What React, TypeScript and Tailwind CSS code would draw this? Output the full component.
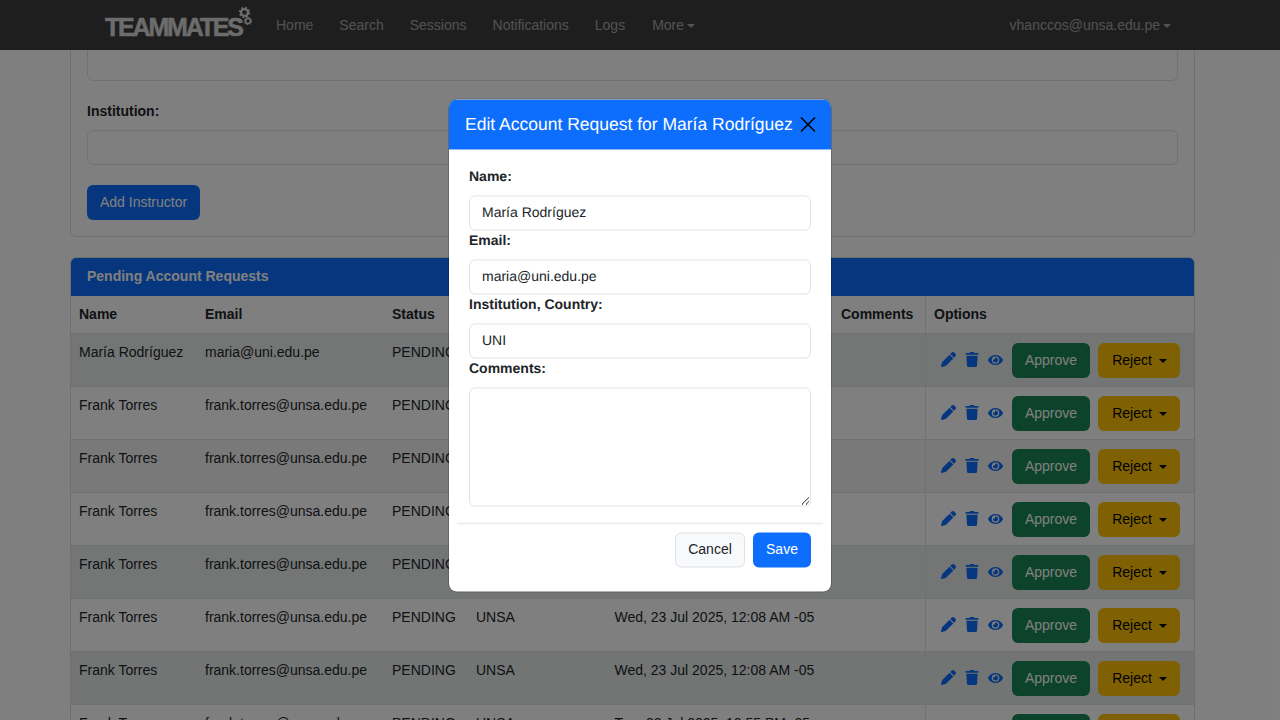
import { FaEye, FaTrash } from "react-icons/fa";
import { FaPen } from "react-icons/fa6";

const navLinks = ["Home", "Search", "Sessions", "Notifications", "Logs"];

const rows = [
  { name: "María Rodríguez", email: "maria@uni.edu.pe", inst: "UNI", date: "Wed, 23 Jul 2025, 12:10 AM -05", tint: "bg-[#e8eceb]" },
  { name: "Frank Torres", email: "frank.torres@unsa.edu.pe", inst: "UNSA", date: "Wed, 23 Jul 2025, 12:08 AM -05", tint: "" },
  { name: "Frank Torres", email: "frank.torres@unsa.edu.pe", inst: "UNSA", date: "Wed, 23 Jul 2025, 12:08 AM -05", tint: "bg-[#f2f2f2]" },
  { name: "Frank Torres", email: "frank.torres@unsa.edu.pe", inst: "UNSA", date: "Wed, 23 Jul 2025, 12:08 AM -05", tint: "" },
  { name: "Frank Torres", email: "frank.torres@unsa.edu.pe", inst: "UNSA", date: "Wed, 23 Jul 2025, 12:08 AM -05", tint: "bg-[#e8eceb]" },
  { name: "Frank Torres", email: "frank.torres@unsa.edu.pe", inst: "UNSA", date: "Wed, 23 Jul 2025, 12:08 AM -05", tint: "" },
  { name: "Frank Torres", email: "frank.torres@unsa.edu.pe", inst: "UNSA", date: "Wed, 23 Jul 2025, 12:08 AM -05", tint: "bg-[#e6e9e8]" },
  { name: "Frank Torres", email: "frank.torres@unsa.edu.pe", inst: "UNSA", date: "Tue, 22 Jul 2025, 10:55 PM -05", tint: "" },
];

const Gear = ({ x, y, r }: { x: number; y: number; r: number }) => (
  <g fill="none" stroke="#d8d8d8">
    <circle cx={x} cy={y} r={r * 0.62} strokeWidth={r * 0.42} />
    <circle cx={x} cy={y} r={r * 0.88} strokeWidth={r * 0.3} strokeDasharray={`${r * 0.345} ${r * 0.345}`} />
  </g>
);

const Caret = ({ gap }: { gap: string }) => (
  <span className={`${gap} inline-block w-0 h-0 align-[2px] border-x-[4px] border-x-transparent border-t-[4px] border-t-current`} />
);

const App = () => {
  return (
    <div className="relative h-screen overflow-hidden bg-white text-[14px] leading-[21px] text-[#212529] font-['Liberation_Sans',Arial,sans-serif]">
      {/* navbar */}
      <nav className="absolute inset-x-0 top-0 z-10 h-[50px] bg-[#3c3c3c] flex items-center pl-[105px] pr-[109px]">
        <div className="relative w-[148px] h-[50px] mr-[23px]">
          <span className="absolute left-0 top-[12px] text-[25px] leading-[30px] font-bold tracking-[-2.2px] text-[#d8d8d8] [-webkit-text-stroke:0.5px_#d8d8d8]">TEAMMATES</span>
          <svg className="absolute left-[131px] top-[4px]" width="20" height="24" viewBox="0 0 20 24">
            <Gear x={8.5} y={8.5} r={5.5} />
            <Gear x={12} y={17} r={4} />
          </svg>
        </div>
        <div className="flex gap-[26px] text-[#ffffff8c]">
          {navLinks.map((link) => (
            <span key={link}>{link}</span>
          ))}
          <span className="ml-px">
            More
            <Caret gap="ml-[3px]" />
          </span>
        </div>
        <span className="ml-auto text-[#ffffff8c]">
          vhanccos@unsa.edu.pe
          <Caret gap="ml-[3px]" />
        </span>
      </nav>

      {/* page, scrolled down */}
      <div className="ml-[70px] w-[1125px] -mt-5">
        <div className="border border-[#00000020] rounded-md px-4 pt-[65px] pb-4">
          <div className="h-[35px] border border-[#dee2e6] rounded-md" />
          <label className="block font-bold mt-5 mb-2">Institution:</label>
          <div className="h-[35px] border border-[#dee2e6] rounded-md" />
          <button className="mt-5 block h-[35px] px-[13px] rounded-md bg-[#0d6efd] text-white">Add Instructor</button>
        </div>

        <div className="mt-5 border border-[#00000020] rounded-md overflow-hidden">
          <div className="h-[38px] bg-[#0d6efd] text-white font-bold flex items-center px-4 pb-[2px]">Pending Account Requests</div>
          <table className="w-full table-fixed border-collapse">
            <colgroup>
              <col className="w-[126px]" />
              <col className="w-[187px]" />
              <col className="w-[84px]" />
              <col className="w-[138px]" />
              <col className="w-[227px]" />
              <col className="w-[92px]" />
              <col />
            </colgroup>
            <thead>
              <tr className="h-[37px] text-left border-b border-[#dee2e6]">
                <th className="px-2">Name</th>
                <th className="px-2">Email</th>
                <th className="px-2">Status</th>
                <th className="px-2">Institute</th>
                <th className="px-2">Created At</th>
                <th className="px-2">Comments</th>
                <th className="pl-[8.5px] pr-2 border-l border-[#dee2e6]">Options</th>
              </tr>
            </thead>
            <tbody>
              {rows.map((row, i) => (
                <tr key={i} className={`h-[53px] border-b border-[#dee2e6] ${row.tint}`}>
                  <td className="px-2 pt-2 align-top">{row.name}</td>
                  <td className="px-2 pt-2 align-top">{row.email}</td>
                  <td className="px-2 pt-2 align-top">PENDING</td>
                  <td className="px-2 pt-2 align-top">{row.inst}</td>
                  <td className="pl-[8.5px] pr-2 pt-2 align-top whitespace-nowrap">{row.date}</td>
                  <td className="px-2 pt-2 align-top"></td>
                  <td className="pl-[15px] pt-px border-l border-[#dee2e6]">
                    <div className="flex items-center text-[#0d6efd]">
                      <FaPen className="w-[15px] h-[15px] -mt-px" />
                      <FaTrash className="ml-[9px] w-[14px] h-[15px] -mt-px" />
                      <FaEye className="ml-[9px] w-[15px] h-[14px] -mt-px" />
                      <button className="ml-[9px] h-[35px] w-[78px] pl-px rounded-md bg-[#198754] text-white">Approve</button>
                      <button className="ml-2 h-[35px] w-[82px] pl-[2px] rounded-md bg-[#ffc107] text-black">
                        Reject
                        <Caret gap="ml-[7px]" />
                      </button>
                    </div>
                  </td>
                </tr>
              ))}
            </tbody>
          </table>
        </div>
      </div>

      {/* backdrop */}
      <div className="absolute inset-0 z-20 bg-black/50" />

      {/* modal */}
      <div className="absolute z-30 left-[449px] top-[99px] w-[382px] h-[492px] translate-y-[0.49px] bg-white rounded-lg overflow-hidden shadow-[0_0_0_1px_rgba(0,0,0,0.175)] [text-rendering:geometricPrecision]">
        <div className="h-[50px] bg-[#0d6efd] flex items-center justify-between pl-4 pr-[15px]">
          <span className="text-[17.5px] text-white">Edit Account Request for María Rodríguez</span>
          <svg width="16" height="16" viewBox="0 0 16 16" className="text-black">
            <path d="M1 1l14 14M15 1L1 15" stroke="currentColor" strokeWidth="1.6" fill="none" />
          </svg>
        </div>
        <div className="px-5 pt-[17px]">
          <label className="block font-bold mb-2">Name:</label>
          <div className="h-[35px] border border-[#dee2e6] rounded-md px-3 flex items-center">María Rodríguez</div>
          <label className="block font-bold mb-2">Email:</label>
          <div className="h-[35px] border border-[#dee2e6] rounded-md px-3 flex items-center">maria@uni.edu.pe</div>
          <label className="block font-bold mb-2">Institution, Country:</label>
          <div className="h-[35px] border border-[#dee2e6] rounded-md px-3 flex items-center">UNI</div>
          <label className="block font-bold mb-2">Comments:</label>
          <textarea readOnly className="block w-full h-[119px] border border-[#dee2e6] rounded-md" />
        </div>
        <div className="mx-2 mt-4 border-t-2 border-[#eef0f2] pt-[8px] px-3 flex justify-end gap-2">
          <button className="h-[35px] w-[70px] rounded-md border border-[#dee2e6] bg-[#f8f9fa]">Cancel</button>
          <button className="h-[35px] w-[58px] rounded-md bg-[#0d6efd] text-white">Save</button>
        </div>
      </div>
    </div>
  );
};

export default App;
